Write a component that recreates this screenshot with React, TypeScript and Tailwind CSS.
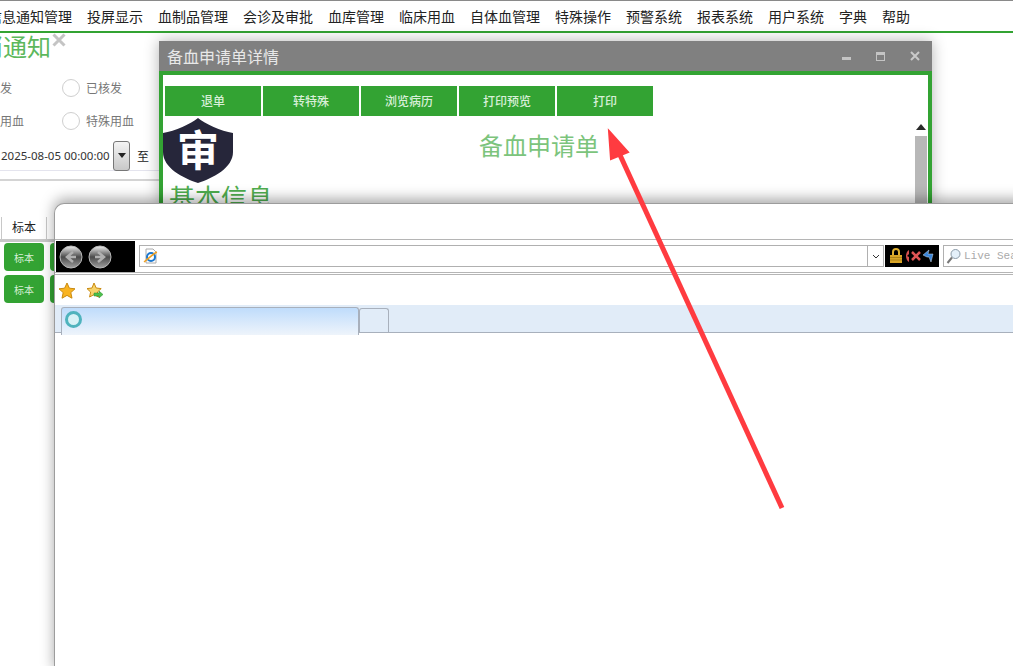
const cjk = { fontFamily: '"Noto Sans CJK SC", "Liberation Sans", sans-serif' };

const menus = ["信息通知管理", "投屏显示", "血制品管理", "会诊及审批", "血库管理", "临床用血", "自体血管理", "特殊操作", "预警系统", "报表系统", "用户系统", "字典", "帮助"];
const actions = ["退单", "转特殊", "浏览病历", "打印预览", "打印"];

function Radio({ label }: { label: string }) {
  return (
    <div className="flex items-center gap-[6px]">
      <span className="h-[18px] w-[18px] rounded-full border border-[#cfcfcf] bg-white" />
      <span className="text-[12px] text-[#777]">{label}</span>
    </div>
  );
}

function MenuBar() {
  return (
    <div className="flex h-[33px] items-center gap-[15px] overflow-hidden border-t border-[#8a8a8a] border-b-2 border-b-[#33a333] bg-white">
      {menus.map((m) => (
        <span key={m} className="shrink-0 text-[14px] leading-none text-[#222] first:-ml-[12px]">{m}</span>
      ))}
    </div>
  );
}

function LeftPanel() {
  return (
    <div className="h-[633px] w-[160px]">
      <div className="flex h-[28px] items-start">
        <span className="-ml-[21px] text-[24px] leading-[26px] text-[#5cb85c]">消通知</span>
        <svg width="14" height="14" viewBox="0 0 14 14" className="ml-[1px]">
          <path d="M1.5 1.5l11 11M12.5 1.5l-11 11" stroke="#c4c4c4" strokeWidth="3" />
        </svg>
      </div>
      <div className="mt-[18px] flex items-center gap-[50px]">
        <span className="-ml-[12px] w-[24px] text-right text-[12px] text-[#777]">核发</span>
        <Radio label="已核发" />
      </div>
      <div className="mt-[15px] flex items-center gap-[38px]">
        <span className="w-[24px] text-[12px] text-[#777]">用血</span>
        <Radio label="特殊用血" />
      </div>
      <div className="mt-[11px] flex h-[30px] items-center border-b border-[#e4e4ee]">
        <span className="w-[113px] whitespace-nowrap pl-[1px] text-[11.5px] text-[#333]" style={{ fontFamily: '"Noto Sans", sans-serif' }}>2025-08-05 00:00:00</span>
        <span className="flex h-[30px] w-[17px] items-center justify-center rounded-[3px] border border-[#777] bg-gradient-to-b from-[#f4f4f4] to-[#c8c8c8]">
          <svg width="8" height="5" viewBox="0 0 8 5"><path d="M0 0h8L4 5z" fill="#222" /></svg>
        </span>
        <span className="ml-[7px] text-[12px] text-[#222]">至</span>
      </div>
      <div className="mt-[8px] h-[2px] bg-[#d4d4d4]" />
      <div className="mt-[36px] flex h-[25px] border-b-[3px] border-[#c8c8c8]">
        <span className="ml-px flex h-[22px] w-[46px] items-center justify-center border-x border-[#c8c8c8] pb-[3px] text-[12px] text-[#222]">标本</span>
      </div>
      <div className="flex flex-col gap-[4px] pl-[4px] pt-px">
        {[0, 1].map((i) => (
          <div key={i} className="flex h-[28px] gap-[6px]">
            <span className="flex h-[28px] w-[40px] items-center justify-center rounded-[4px] bg-[#33a333] text-[10px] text-[#d8f0d8]">标本</span>
            <span className="h-[28px] w-[40px] rounded-[4px] bg-[#33a333]" />
          </div>
        ))}
      </div>
    </div>
  );
}

function Shield() {
  return (
    <svg width="70" height="66" viewBox="0 0 70 66" className="absolute left-0 top-[43px]">
      <path d="M35 0 C42 6 58 13 70 15 V34 C70 50 50 60 35 65 C20 60 0 50 0 34 V15 C12 13 28 6 35 0 Z" fill="#26263a" />
      <text x="35" y="48" textAnchor="middle" fontSize="42" fontWeight="700" fill="#fff" style={cjk}>审</text>
    </svg>
  );
}

function DetailWindow() {
  return (
    <div className="absolute left-[159px] top-[41px] h-[165px] w-[773px] shadow-[0_0_14px_rgba(0,0,0,0.3)]">
      <div className="flex h-[30px] items-center bg-[#808080] pl-[8px] pr-[12px]">
        <span className="text-[16px] text-[#e8e8e8]">备血申请单详情</span>
        <div className="ml-auto flex items-center gap-[25px]">
          <span className="mt-[5px] h-[3px] w-[9px] bg-[#c4c4c4]" />
          <span className="h-[9px] w-[9px] border border-t-[3px] border-[#c4c4c4]" />
          <svg width="10" height="10" viewBox="0 0 10 10"><path d="M1 1l8 8M9 1l-8 8" stroke="#c9c9c9" strokeWidth="2" /></svg>
        </div>
      </div>
      <div className="relative h-[135px] overflow-hidden border-x-4 border-t-4 border-[#33a333] bg-white">
        <div className="flex gap-[2px] pl-[2px] pt-[11px]">
          {actions.map((a) => (
            <span key={a} className="flex h-[30px] w-[96px] items-center justify-center bg-[#33a333] text-[12px] font-medium text-[#d8efd8]">{a}</span>
          ))}
        </div>
        <Shield />
        <p className="absolute left-[316px] top-[58px] text-[24px] leading-none text-[#7cc47c]">备血申请单</p>
        <p className="absolute left-[6px] top-[109px] text-[26px] leading-none text-[#4fae4f]">基本信息</p>
        <div className="absolute right-[1px] top-[49px] flex w-[12px] flex-col items-center">
          <svg width="10" height="6" viewBox="0 0 10 6"><path d="M5 0l5 6H0z" fill="#2a2a2a" /></svg>
          <span className="mt-[6px] h-[70px] w-[12px] bg-[#b8b8b8]" />
        </div>
      </div>
    </div>
  );
}

function BrowserWindow() {
  return (
    <div className="absolute left-[54px] top-[203px] h-[470px] w-[980px] rounded-tl-[10px] border-l border-t border-[#9c9c9c] bg-white shadow-[0_-4px_14px_rgba(0,0,0,0.35)]">
      <div className="h-[36px] border-b border-[#b5b5b5]" />
      <div className="flex h-[35px] items-start border-b-[3px] border-double border-[#b5b5b5] pl-px pt-px">
        <div className="flex h-[31px] w-[79px] shrink-0 items-center gap-[5px] bg-black pl-[3px]">
          {["M14 7l-6 5 6 5M8 12h9", "M10 7l6 5-6 5M16 12H7"].map((d) => (
            <svg key={d} width="24" height="24" viewBox="0 0 24 24">
              <defs>
                <linearGradient id="navBall" x1="0" y1="0" x2="0" y2="1">
                  <stop offset="0" stopColor="#f0f0f0" />
                  <stop offset="0.5" stopColor="#4a4a4a" />
                  <stop offset="1" stopColor="#a0a0a0" />
                </linearGradient>
              </defs>
              <circle cx="12" cy="12" r="11" fill="url(#navBall)" stroke="#b8b8b8" />
              <path d={d} fill="none" stroke="#b0b0b0" strokeWidth="2.5" />
            </svg>
          ))}
        </div>
        <div className="ml-[4px] mt-[4px] flex h-[22px] w-[745px] shrink-0 items-center border border-[#b0b0b0] bg-white">
          <svg width="16" height="16" viewBox="0 0 16 16" className="ml-[3px]">
            <path d="M3 1h7l3 3v11H3z" fill="#fff" stroke="#aaa" />
            <circle cx="8" cy="9" r="4" fill="none" stroke="#1b78d0" strokeWidth="2" />
            <path d="M1 14C4 12 11 5 14 4" fill="none" stroke="#f0a020" strokeWidth="1.5" />
          </svg>
          <span className="ml-auto flex h-[20px] w-[16px] items-center justify-center border-l border-[#b0b0b0]">
            <svg width="8" height="5" viewBox="0 0 8 5"><path d="M1 1l3 3 3-3" fill="none" stroke="#333" /></svg>
          </span>
        </div>
        <div className="ml-px mt-[4px] flex h-[22px] w-[54px] shrink-0 items-center gap-[1px] bg-black pl-[4px]">
          <svg width="14" height="16" viewBox="0 0 14 16">
            <path d="M4 7V4a3 3 0 0 1 6 0v3" fill="none" stroke="#e0b030" strokeWidth="2" />
            <rect x="1" y="7" width="12" height="8" fill="#d9a526" />
            <path d="M1 9.5h12M1 12h12" stroke="#9a7414" strokeWidth="0.7" />
          </svg>
          <svg width="6" height="14" viewBox="0 0 6 14"><path d="M5 1C1 3 1 11 5 13V8L3 7l2-2z" fill="#d85050" /></svg>
          <svg width="10" height="12" viewBox="0 0 10 12"><path d="M1 2l8 8M9 2l-8 8" stroke="#e05555" strokeWidth="2.5" /></svg>
          <svg width="13" height="14" viewBox="0 0 13 14"><path d="M1 6l6-5-1 4h5l-2 8-2-5H5z" fill="#3a84d8" stroke="#cde" strokeWidth="0.5" /></svg>
        </div>
        <div className="ml-[4px] mt-[4px] flex h-[22px] flex-1 items-center border border-[#b0b0b0] bg-white pl-[2px]">
          <svg width="15" height="16" viewBox="0 0 15 16" className="shrink-0">
            <circle cx="9.5" cy="6" r="4.5" fill="#e4f0fa" stroke="#8a9aa8" />
            <path d="M6 9.5L1.5 15" stroke="#777" strokeWidth="2" />
          </svg>
          <span className="ml-[3px] whitespace-nowrap text-[11px] text-[#aaa]" style={{ fontFamily: '"Liberation Mono", monospace' }}>Live Search</span>
        </div>
      </div>
      <div className="flex h-[30px] items-center gap-[10px] pl-[3px]">
        <svg width="18" height="17" viewBox="0 0 18 17"><path d="M9 1l2.4 5.2 5.6.6-4.2 3.8 1.2 5.6L9 13.4l-5 2.8 1.2-5.6L1 6.8l5.6-.6z" fill="#f9b421" stroke="#c98a10" /></svg>
        <svg width="18" height="17" viewBox="0 0 18 17">
          <path d="M8 1l2.2 5 5 .6-3.8 3.4 1 5L8 12.6l-4.4 2.4 1-5L1 6.6l5-.6z" fill="#f6d36a" stroke="#c98a10" />
          <path d="M8 11h5V9l4 3.5-4 3.5v-2H8z" fill="#4cc04c" stroke="#2a8a2a" strokeWidth="0.5" />
        </svg>
      </div>
      <div className="flex h-[28px] items-end border-b border-[#a8b0bc] bg-[#e1ecf8] pl-[6px]">
        <div className="-mb-[3px] flex h-[28px] w-[298px] items-start rounded-t-[3px] border-x border-t border-[#a8b0bc] border-b-0 bg-gradient-to-b from-[#bfdcfb] to-[#eef4fb] pl-[3px] pt-[3px]">
          <span className="h-[17px] w-[17px] rounded-full border-[3px] border-[#4fb3bd] bg-[#d8f2f6]" />
        </div>
        <div className="h-[24px] w-[30px] rounded-t-[3px] border border-b-0 border-[#a8b0bc] bg-[#e1ecf8]" />
      </div>
    </div>
  );
}

export default function App() {
  return (
    <div className="relative h-[666px] w-[1013px] overflow-hidden bg-white" style={cjk}>
      <MenuBar />
      <LeftPanel />
      <DetailWindow />
      <BrowserWindow />
      <svg width="1013" height="666" viewBox="0 0 1013 666" className="pointer-events-none absolute left-0 top-0">
        <path d="M782 508L620 155" stroke="#ff3b40" strokeWidth="5" fill="none" />
        <path d="M609 131L628 152L611 159Z" fill="#ff3b40" stroke="#ff3b40" strokeWidth="2" />
      </svg>
    </div>
  );
}
